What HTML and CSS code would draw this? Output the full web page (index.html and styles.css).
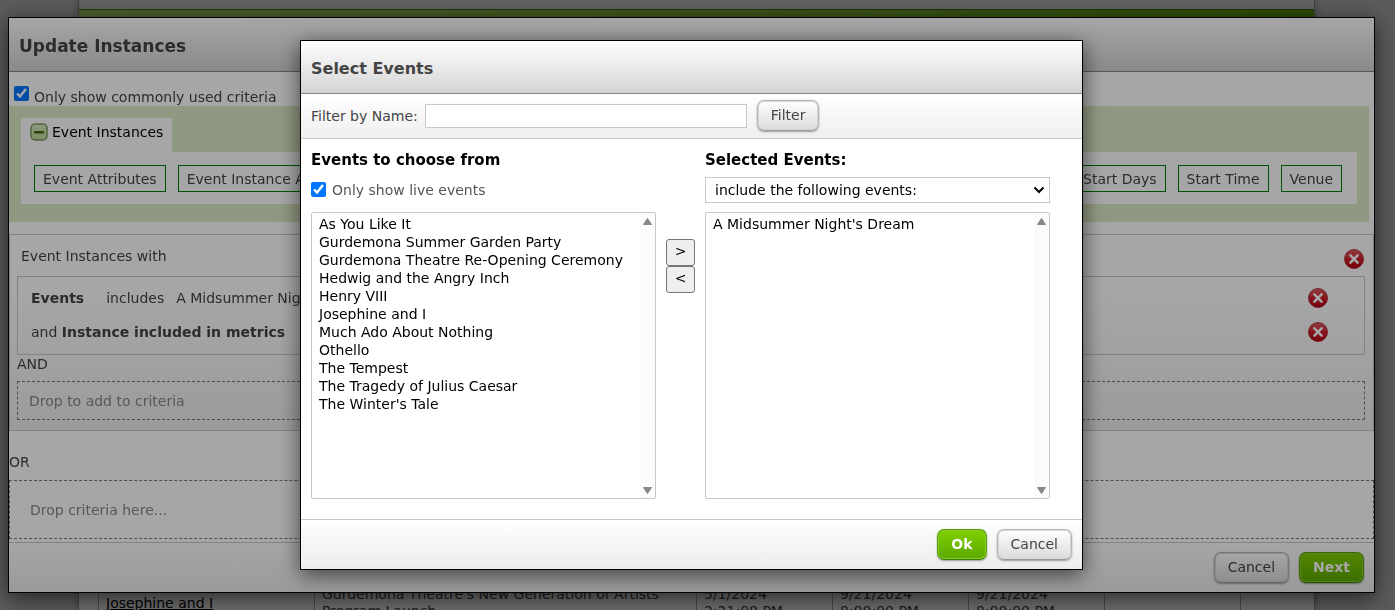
FILE: index.html
```
<!DOCTYPE html>
<html lang="en">
<head>
  <meta charset="UTF-8" />
  <title>Update Instances</title>
  <link rel="stylesheet" href="styles.css">
</head>
<body>

<div class="page">
  <div class="page-top"></div>
  <div class="page-nav"></div>
  <div class="events-wrap">
    <table class="events-table">
      <tr>
        <td class="col-event"><a href="#">Josephine and I</a></td>
        <td class="col-name">Gurdemona Theatre's New Generation of Artists Program Launch</td>
        <td class="col-date">5/1/2024<br>2:21:08 PM</td>
        <td class="col-date">9/21/2024<br>8:00:00 PM</td>
        <td class="col-date">9/21/2024<br>8:00:00 PM</td>
        <td class="col-date"></td>
        <td></td>
      </tr>
    </table>
  </div>
</div>

<!-- Update Instances dialog -->
<div class="overlay">
  <div class="dialog dialog-wide">
    <h1 class="dialog-title">Update Instances</h1>

    <label class="common-only">
      <input type="checkbox" checked>
      <span>Only show commonly used criteria</span>
    </label>

    <div class="criteria">
      <div class="criteria-tab">
        <svg class="collapse-icon" viewBox="0 0 18 18">
          <defs>
            <linearGradient id="collapseFill" x1="0" y1="0" x2="0" y2="1">
              <stop offset="0" stop-color="#dcebc4"/>
              <stop offset="1" stop-color="#bcd898"/>
            </linearGradient>
          </defs>
          <rect x="1" y="1" width="16" height="16" rx="4" fill="url(#collapseFill)" stroke="#7d9c60" stroke-width="1.5"/>
          <rect x="4" y="8" width="10" height="2.4" rx="0.5" fill="#3f6d10"/>
        </svg>
        <span>Event Instances</span>
      </div>
      <div class="criteria-list">
        <div class="criteria-group">
          <button type="button" class="criterion">Event Attributes</button>
          <button type="button" class="criterion">Event Instance Attributes</button>
        </div>
        <div class="criteria-group">
          <button type="button" class="criterion">Start Days</button>
          <button type="button" class="criterion">Start Time</button>
          <button type="button" class="criterion">Venue</button>
        </div>
      </div>
    </div>

    <div class="rules">
      <div class="rules-head">
        <span>Event Instances with</span>
        <button type="button" class="remove" aria-label="Remove group">
          <svg viewBox="0 0 20 20">
            <defs>
              <linearGradient id="removeFill" x1="0" y1="0" x2="0" y2="1">
                <stop offset="0" stop-color="#e0606a"/>
                <stop offset="0.5" stop-color="#cf1f2c"/>
                <stop offset="1" stop-color="#b80010"/>
              </linearGradient>
            </defs>
            <circle cx="10" cy="10" r="9.5" fill="url(#removeFill)" stroke="#a3222c" stroke-width="0.8"/>
            <path d="M6.4 6.4l7.2 7.2M13.6 6.4l-7.2 7.2" stroke="#fff" stroke-width="2.6" stroke-linecap="round"/>
          </svg>
        </button>
      </div>
      <div class="rules-box">
        <div class="rule">
          <p><strong>Events</strong><span class="rule-op">includes</span><span>A Midsummer Night's Dream</span></p>
          <button type="button" class="remove" aria-label="Remove events">
            <svg viewBox="0 0 20 20">
              <circle cx="10" cy="10" r="9.5" fill="url(#removeFill)" stroke="#a3222c" stroke-width="0.8"/>
              <path d="M6.4 6.4l7.2 7.2M13.6 6.4l-7.2 7.2" stroke="#fff" stroke-width="2.6" stroke-linecap="round"/>
            </svg>
          </button>
        </div>
        <div class="rule">
          <p>and <strong>Instance included in metrics</strong></p>
          <button type="button" class="remove" aria-label="Remove metrics">
            <svg viewBox="0 0 20 20">
              <circle cx="10" cy="10" r="9.5" fill="url(#removeFill)" stroke="#a3222c" stroke-width="0.8"/>
              <path d="M6.4 6.4l7.2 7.2M13.6 6.4l-7.2 7.2" stroke="#fff" stroke-width="2.6" stroke-linecap="round"/>
            </svg>
          </button>
        </div>
      </div>
      <p class="joiner">AND</p>
      <div class="drop-and">Drop to add to criteria</div>
    </div>

    <p class="joiner-or">OR</p>
    <div class="drop-or">Drop criteria here...</div>

    <div class="dialog-footer">
      <button type="button" class="btn">Cancel</button>
      <button type="button" class="btn btn-primary">Next</button>
    </div>
  </div>
</div>

<!-- Select Events dialog -->
<div class="overlay">
  <div class="dialog dialog-select">
    <h2 class="dialog-title">Select Events</h2>

    <div class="filter-bar">
      <label for="filterName">Filter by Name:</label>
      <input type="text" id="filterName">
      <button type="button" class="btn">Filter</button>
    </div>

    <div class="picker">
      <div class="picker-col">
        <h3>Events to choose from</h3>
        <label class="live-only">
          <input type="checkbox" checked>
          <span>Only show live events</span>
        </label>
        <select multiple class="event-list" aria-label="Events to choose from">
          <option>As You Like It</option>
          <option>Gurdemona Summer Garden Party</option>
          <option>Gurdemona Theatre Re-Opening Ceremony</option>
          <option>Hedwig and the Angry Inch</option>
          <option>Henry VIII</option>
          <option>Josephine and I</option>
          <option>Much Ado About Nothing</option>
          <option>Othello</option>
          <option>The Tempest</option>
          <option>The Tragedy of Julius Caesar</option>
          <option>The Winter's Tale</option>
        </select>
      </div>

      <div class="picker-move">
        <button type="button" aria-label="Add event">&gt;</button>
        <button type="button" aria-label="Remove event">&lt;</button>
      </div>

      <div class="picker-col">
        <h3>Selected Events:</h3>
        <select class="include-mode" aria-label="Include mode">
          <option>include the following events:</option>
        </select>
        <select multiple class="event-list" aria-label="Selected events">
          <option>A Midsummer Night's Dream</option>
        </select>
      </div>
    </div>

    <div class="dialog-footer">
      <button type="button" class="btn btn-primary">Ok</button>
      <button type="button" class="btn">Cancel</button>
    </div>
  </div>
</div>

</body>
</html>
```
FILE: styles.css
```
* {
  box-sizing: border-box;
  margin: 0;
  padding: 0;
}

body {
  background: #d5d5d5;
  color: #444;
  font-family: Verdana, "DejaVu Sans", sans-serif;
  font-size: 14px;
  line-height: 18px;
  height: 100vh;
  overflow: hidden;
}

button,
input,
select {
  font: inherit;
  color: inherit;
}

input[type="checkbox"] {
  width: 15px;
  height: 15px;
  flex: none;
}

/* page behind the dialogs */
.page {
  display: flex;
  flex-direction: column;
  height: 100vh;
  margin: 0 80px 0 78px;
  background: #fff;
  border: solid #999;
  border-width: 0 1px;
  box-shadow: 0 0 8px rgba(0, 0, 0, 0.3);
}

.page-top {
  height: 9px;
  background: #e3e3e3;
}

.page-nav {
  height: 40px;
  border-top: 1px solid #4b7a14;
  background: linear-gradient(to right, #b4e070, #6cb010);
}

.events-wrap {
  height: 26px;
  margin-top: auto;
  padding-left: 19px;
}

.events-table {
  width: 100%;
  table-layout: fixed;
  border-collapse: collapse;
  line-height: 17px;
}

.events-table td {
  padding: 2px 7px;
  border-left: 1px solid #aaa;
}

.events-table a {
  color: #000;
}

.col-event {
  width: 216px;
}

.col-name {
  width: 382px;
}

.col-date {
  width: 136px;
}

/* dialogs */
.overlay {
  position: fixed;
  inset: 0;
  display: grid;
  place-items: center;
  padding-right: 12px;
  background: rgba(0, 0, 0, 0.35);
}

.dialog {
  background: #fff;
  border: 1px solid #000;
  box-shadow: 0 5px 20px rgba(0, 0, 0, 0.6);
}

.dialog-wide {
  width: calc(100% - 16px);
}

.dialog-select {
  width: 100%;
  max-width: 783px;
}

.dialog-title {
  padding: 17px 10px 13px;
  border-bottom: 1px solid #888;
  background: linear-gradient(#fff, #d4d4d4);
  font-size: 16px;
  line-height: 22px;
}

.dialog-wide .dialog-title {
  padding-bottom: 14px;
  font-size: 17px;
}

.dialog-footer {
  display: flex;
  justify-content: flex-end;
  gap: 10px;
  padding: 9px 10px;
  border-top: 1px solid #c8c8c8;
  background: linear-gradient(#fff, #ececec);
}

.btn {
  height: 31px;
  padding: 0 13px 1px;
  border: 1px solid #b4b4b4;
  border-bottom-color: #999;
  border-radius: 7px;
  background: linear-gradient(#fff, #dcdadb);
  box-shadow: inset 0 0 0 1px #d8d8d8, 0 1px 2px rgba(0, 0, 0, 0.35);
}

.btn-primary {
  border-color: #58a000;
  border-bottom-color: #3d7a00;
  background: linear-gradient(#80d000, #5ca800);
  box-shadow: inset 0 0 0 1px #88cc30, 0 1px 2px rgba(0, 0, 0, 0.35);
  color: #fff;
  font-weight: bold;
}

/* criteria */
.common-only {
  display: flex;
  gap: 5px;
  padding: 14px 5px 0;
}

.common-only span {
  padding-top: 2px;
}

.criteria {
  margin-right: 5px;
  padding: 12px 12px 18px;
  background: #dceac6;
}

.criteria-tab {
  display: inline-flex;
  align-items: center;
  gap: 4px;
  height: 34px;
  padding: 0 9px 6px;
  background: #fff;
  color: #000;
  vertical-align: top;
}

.collapse-icon {
  width: 18px;
  height: 18px;
}

.criteria-list {
  display: flex;
  justify-content: space-between;
  padding: 13px 15px 12px 13px;
  background: #fff;
}

.criteria-group {
  display: flex;
  gap: 12px;
}

.criterion {
  height: 27px;
  padding: 0 8px;
  border: 1px solid #008000;
  background: #fff;
}

.rules {
  margin-top: 12px;
  padding: 10px 8px 10px 7px;
  border: 1px solid #c8c8c8;
  background: linear-gradient(#fff 30%, #efefef);
}

.rules-head {
  display: flex;
  justify-content: space-between;
  height: 31px;
  padding: 2px 1px 0 4px;
}

.remove {
  width: 20px;
  height: 20px;
  border: 0;
  background: none;
}

.remove svg {
  display: block;
}

.rules-head .remove {
  margin-top: 2px;
}

.rules-box {
  padding: 4px 36px 5px 13px;
  border: 1px solid #c8c8c8;
}

.rule {
  display: flex;
  justify-content: space-between;
  align-items: center;
  height: 34px;
}

.rule-op {
  margin: 0 12px 0 22px;
}

.joiner {
  height: 26px;
}

.drop-and {
  padding: 10px 11px 9px;
  border: 1px dashed #777;
  color: #888;
}

.joiner-or {
  padding: 22px 0 9px;
}

.drop-or {
  margin-bottom: 3px;
  padding: 20px 20px 19px;
  border: 1px dashed #777;
  color: #888;
}

/* event picker */
.filter-bar {
  display: flex;
  align-items: center;
  padding: 6px 10px 7px;
  border-bottom: 1px solid #c8c8c8;
  background: linear-gradient(#fff, #efefef);
}

.filter-bar input {
  width: 322px;
  height: 24px;
  margin: 0 10px 0 7px;
  padding: 0 4px;
  border: 1px solid #c8c8c8;
}

.picker {
  display: grid;
  grid-template-columns: 1fr 29px 1fr;
  gap: 10px;
  padding: 12px 32px 20px 10px;
}

.picker-col h3 {
  margin-bottom: 8px;
  color: #000;
  font-size: 15px;
}

.live-only {
  display: flex;
  align-items: center;
  gap: 6px;
  height: 26px;
  margin-bottom: 9px;
  padding-bottom: 1px;
  color: #555;
}

.include-mode {
  display: block;
  width: 100%;
  height: 26px;
  margin-bottom: 9px;
  padding-left: 9px;
  border: 1px solid #c8c8c8;
  appearance: none;
  background: #fff url("data:image/svg+xml,%3Csvg xmlns='http://www.w3.org/2000/svg' width='12' height='8'%3E%3Cpath d='M1.5 1.5L6 6l4.500-4.500' fill='none' stroke='%23000' stroke-width='2'/%3E%3C/svg%3E") no-repeat right 4px center;
  color: #000;
}

.event-list {
  display: block;
  width: 100%;
  height: 287px;
  padding: 2px 5px;
  border: 1px solid #c8c8c8;
  border-radius: 2px;
  overflow: hidden;
  background:
    url("data:image/svg+xml,%3Csvg xmlns='http://www.w3.org/2000/svg' width='9' height='7'%3E%3Cpath d='M4.500 0.500L8.500 6.500h-8z' fill='%23888' stroke='%23888' stroke-linejoin='round'/%3E%3C/svg%3E") no-repeat right 3px top 5px,
    url("data:image/svg+xml,%3Csvg xmlns='http://www.w3.org/2000/svg' width='9' height='7'%3E%3Cpath d='M4.500 6.500L8.500 0.500h-8z' fill='%23888' stroke='%23888' stroke-linejoin='round'/%3E%3C/svg%3E") no-repeat right 3px bottom 4px,
    linear-gradient(#fbfbfb, #fbfbfb) no-repeat right / 15px 100%,
    #fff;
  color: #000;
}

.event-list option {
  height: 18px;
  padding: 1px 2px 0;
}

.picker-move {
  display: flex;
  flex-direction: column;
  padding-top: 88px;
}

.picker-move button {
  height: 27px;
  padding-bottom: 3px;
  border: 1px solid #767676;
  border-radius: 3px;
  background: #efefef;
  color: #000;
}
```
